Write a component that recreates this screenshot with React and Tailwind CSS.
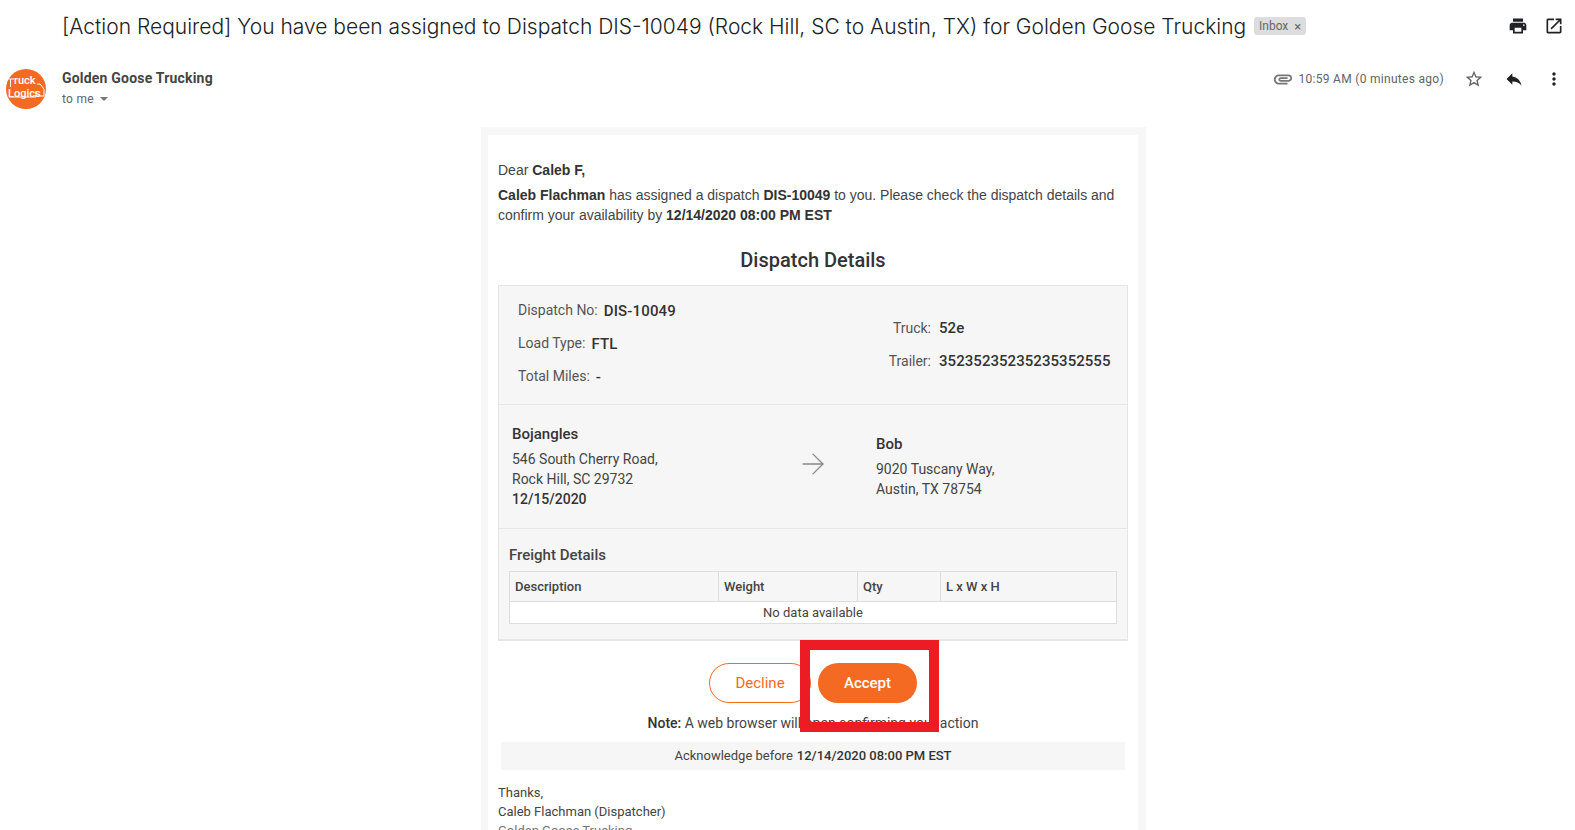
import { ArrowRight } from 'lucide-react'

const icons = {
  print: 'M19 8H5c-1.66 0-3 1.34-3 3v6h4v4h12v-4h4v-6c0-1.66-1.34-3-3-3zm-3 11H8v-5h8v5zm3-7c-.55 0-1-.45-1-1s.45-1 1-1 1 .45 1 1-.45 1-1 1zm-1-9H6v4h12V3z',
  open: 'M19 19H5V5h7V3H5c-1.11 0-2 .9-2 2v14c0 1.1.89 2 2 2h14c1.1 0 2-.9 2-2v-7h-2v7zM14 3v2h3.59l-9.83 9.83 1.41 1.41L19 6.41V10h2V3h-7z',
  clip: 'M2 12.5C2 9.46 4.46 7 7.5 7H18c2.21 0 4 1.79 4 4s-1.79 4-4 4H9.5C8.12 15 7 13.88 7 12.5S8.12 10 9.5 10H17v2H9.41c-.55 0-.55 1 0 1H18c1.1 0 2-.9 2-2s-.9-2-2-2H7.5C5.57 9 4 10.57 4 12.5S5.57 16 7.5 16H17v2H7.5C4.46 18 2 15.54 2 12.5z',
  star: 'M22 9.24l-7.19-.62L12 2 9.19 8.63 2 9.24l5.46 4.73L5.82 21 12 17.27 18.18 21l-1.63-7.03L22 9.24zM12 15.4l-3.76 2.27 1-4.28-3.32-2.88 4.38-.38L12 6.1l1.71 4.04 4.38.38-3.32 2.88 1 4.28L12 15.4z',
  reply: 'M10 9V5l-7 7 7 7v-4.1c5 0 8.5 1.6 11 5.1-1-5-4-10-11-11z',
  more: 'M12 8c1.1 0 2-.9 2-2s-.9-2-2-2-2 .9-2 2 .9 2 2 2zm0 2c-1.1 0-2 .9-2 2s.9 2 2 2 2-.9 2-2-.9-2-2-2zm0 6c-1.1 0-2 .9-2 2s.9 2 2 2 2-.9 2-2-.9-2-2-2z',
}

function Icon({ name, className }) {
  return (
    <svg viewBox="0 0 24 24" fill="currentColor" className={className}>
      <path d={icons[name]} />
    </svg>
  )
}

function Logo() {
  return (
    <div className="relative h-10 w-10 shrink-0 overflow-hidden rounded-full bg-[#f56a23] text-white">
      <svg viewBox="0 0 40 40" className="absolute inset-0 h-10 w-10" fill="none" stroke="white" strokeWidth="1">
        <path d="M31 15h3l4 5v7h-8" />
        <path d="M3 28h27v-6" />
        <path d="M1 10h7M4.5 10v8" />
      </svg>
      <span className="absolute left-[8px] top-[7px] text-[11px] font-medium leading-[9px]">ruck</span>
      <span className="absolute left-[2px] top-[20px] text-[11px] font-medium leading-[9px]">Logics</span>
    </div>
  )
}

function Field({ label, value }) {
  return (
    <div className="flex h-[33px] items-center">
      <span className="mr-[6px] text-[#555]">{label}</span>
      <b className="mt-[3px] text-[15px] font-medium tracking-[0.15px] text-[#333]">{value}</b>
    </div>
  )
}

export default function App() {
  return (
    <div className="h-[830px] w-[1575px] overflow-hidden bg-white font-['Roboto',sans-serif] text-[14px] leading-5 text-[#444]">
      {/* Subject */}
      <div className="flex h-[52px] items-center pl-[62px] pr-[11px]">
        <h1 className="mt-[1px] whitespace-nowrap font-['Inter',sans-serif] text-[21px] font-light leading-7 text-[#202124]">
          [Action Required] You have been assigned to Dispatch DIS-10049 (Rock Hill, SC to Austin, TX) for Golden Goose Trucking
        </h1>
        <span className="ml-[8px] flex h-[18px] w-[52px] items-center justify-center gap-[6px] rounded-[3px] bg-[#ddd] text-[12px] text-[#666]">
          Inbox <span className="text-[13px] leading-none">×</span>
        </span>
        <Icon name="print" className="ml-auto h-5 w-5 text-[#202124]" />
        <Icon name="open" className="ml-4 h-5 w-5 text-[#202124]" />
      </div>

      {/* Sender */}
      <div className="mt-[17px] flex h-10 pl-[6px] pr-[11px]">
        <Logo />
        <div className="ml-4">
          <div className="text-[14px] font-bold leading-[18px] tracking-[0.2px] text-[#444]">Golden Goose Trucking</div>
          <div className="mt-[4px] flex items-center text-[12px] leading-4 tracking-[0.3px] text-[#5f6368]">
            to me
            <span className="ml-[6px] h-0 w-0 border-x-[4px] border-t-[4px] border-x-transparent border-t-[#777]" />
          </div>
        </div>
        <div className="ml-auto flex h-5 items-center text-[#5f6368]">
          <Icon name="clip" className="h-[22px] w-[22px] text-[#777]" />
          <span className="ml-[4px] text-[12px] tracking-[0.3px]">10:59 AM (0 minutes ago)</span>
          <Icon name="star" className="ml-5 h-5 w-5" />
          <Icon name="reply" className="ml-[20px] h-5 w-5 text-[#202124]" />
          <Icon name="more" className="ml-[20px] h-5 w-5 text-[#202124]" />
        </div>
      </div>

      {/* Email body */}
      <div className="relative ml-[481px] mt-[18px] w-[665px] bg-[#f7f7f7] pl-[7px] pr-[8px] pt-2">
        <div className="bg-white px-[10px] pt-[25px]">
          <div className="font-['Liberation_Sans',Arial,sans-serif]">
            <p>Dear <b className="font-bold text-[#333]">Caleb F,</b></p>
            <p className="mt-[5px]">
              <b className="font-bold text-[#333]">Caleb Flachman</b> has assigned a dispatch <b className="font-bold text-[#333]">DIS-10049</b> to you. Please check the dispatch details and
              <br />
              confirm your availability by <b className="font-bold text-[#333]">12/14/2020 08:00 PM EST</b>
            </p>
          </div>
          <h2 className="mt-[23px] text-center text-[20px] font-medium leading-6 text-[#333]">Dispatch Details</h2>

          <div className="mt-[13px] border border-b-2 border-[#e6e6e6] bg-[#f6f6f6]">
            <div className="flex h-[119px] justify-between border-b border-[#e6e6e6] pl-[19px] pr-[16px] pt-[7px]">
              <div>
                <Field label="Dispatch No:" value="DIS-10049" />
                <Field label="Load Type:" value="FTL" />
                <Field label="Total Miles:" value="-" />
              </div>
              <div className="pt-[18px]">
                <div className="flex h-[33px] items-center">
                  <span className="w-[54px] text-right text-[#555]">Truck:</span>
                  <b className="ml-2 text-[15px] font-medium tracking-[0.05px] text-[#333]">52e</b>
                </div>
                <div className="flex h-[33px] items-center">
                  <span className="w-[54px] text-right text-[#555]">Trailer:</span>
                  <b className="ml-2 w-[172px] text-[15px] font-medium tracking-[0.05px] text-[#333]">35235235235235352555</b>
                </div>
              </div>
            </div>

            <div className="flex h-[124px] border-b border-[#e6e6e6] pl-[13px]">
              <div className="w-[266px] pt-[19px]">
                <div className="text-[15px] font-medium text-[#333]">Bojangles</div>
                <div className="mt-[5px]">546 South Cherry Road,</div>
                <div>Rock Hill, SC 29732</div>
                <div className="font-medium text-[#333]">12/15/2020</div>
              </div>
              <div className="flex w-[98px] items-center pb-[6px]">
                <ArrowRight size={34} strokeWidth={0.9} className="ml-[18px] text-[#888]" />
              </div>
              <div className="pt-[29px]">
                <div className="text-[15px] font-medium text-[#333]">Bob</div>
                <div className="mt-[5px]">9020 Tuscany Way,</div>
                <div>Austin, TX 78754</div>
              </div>
            </div>

            <div className="h-[110px] px-[10px] pt-4">
              <div className="text-[15px] font-medium leading-5 text-[#444]">Freight Details</div>
              <div className="mt-[6px] w-[608px] border border-[#ddd] text-[13px]">
                <div className="grid h-[30px] grid-cols-[208px_139px_83px_1fr] border-b border-[#ddd] font-medium text-[#444]">
                  <div className="flex items-center pl-[5px]">Description</div>
                  <div className="flex items-center border-l border-[#ddd] pl-[5px]">Weight</div>
                  <div className="flex items-center border-l border-[#ddd] pl-[5px]">Qty</div>
                  <div className="flex items-center border-l border-[#ddd] pl-[5px]">L x W x H</div>
                </div>
                <div className="flex h-[21px] items-center justify-center bg-white">No data available</div>
              </div>
            </div>
          </div>

          <div className="mt-[22px] flex justify-center gap-[7px]">
            <div className="flex h-10 w-[102px] items-center justify-center rounded-[20px] border border-[#f56a23] text-[15px] text-[#f56a23]">Decline</div>
            <div className="flex h-10 w-[99px] items-center justify-center rounded-[20px] bg-[#f56a23] text-[15px] font-medium text-white">Accept</div>
          </div>
          <p className="mt-[10px] text-center">
            <b className="font-medium text-[#333]">Note:</b> A web browser will open confirming your action
          </p>
          <div className="ml-[3px] mt-[9px] flex h-7 w-[624px] items-center justify-center gap-1 bg-[#f6f6f6] text-[13px]">
            Acknowledge before <b className="font-medium text-[#333]">12/14/2020 08:00 PM EST</b>
          </div>
          <div className="mt-[13px] text-[13px] leading-[19px]">
            <p>Thanks,</p>
            <p>Caleb Flachman (Dispatcher)</p>
            <p className="text-[#777]">Golden Goose Trucking</p>
          </div>
        </div>

        {/* Annotation drawn over the screenshot */}
        <div className="absolute left-[319px] top-[513px] h-[92px] w-[139px] border-[10px] border-[#ed1c24]" />
      </div>
    </div>
  )
}
